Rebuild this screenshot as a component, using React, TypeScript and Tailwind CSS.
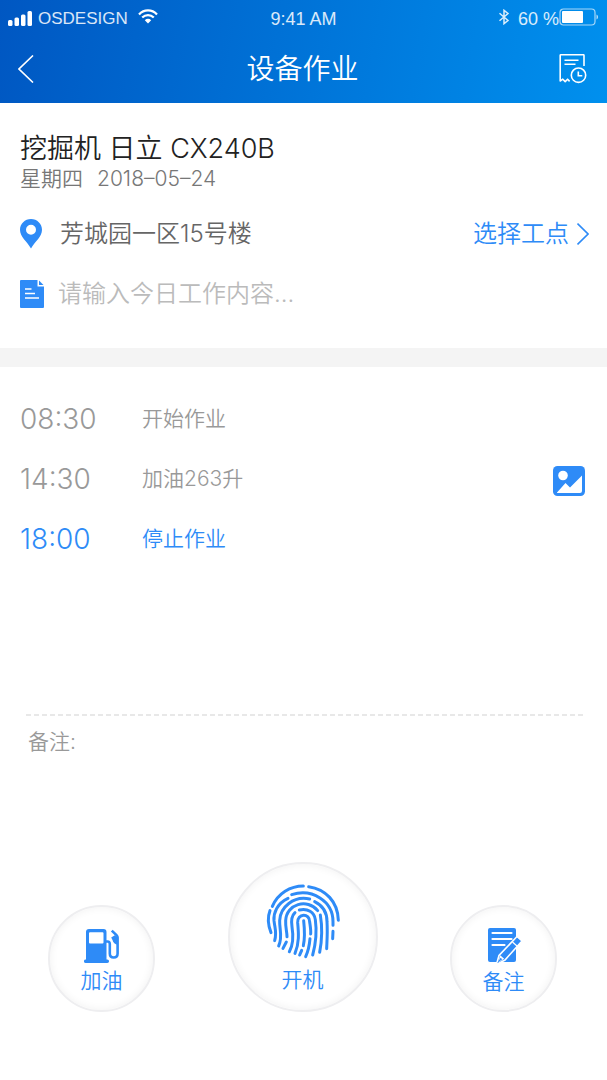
import type { ReactNode } from "react";
import { clsx } from "clsx";

type LogEntry = {
  time: string;
  label: string;
  active?: boolean;
  hasPhoto?: boolean;
};

const entries: LogEntry[] = [
  { time: "08:30", label: "开始作业" },
  { time: "14:30", label: "加油263升", hasPhoto: true },
  { time: "18:00", label: "停止作业", active: true },
];

function SignalIcon() {
  return (
    <svg className="h-4 w-6" viewBox="0 0 24 16" fill="currentColor">
      <rect x="0" y="9" width="4.5" height="6" rx="1.5" />
      <rect x="6.5" y="6.5" width="4.5" height="8.5" rx="1.5" />
      <rect x="13" y="3.5" width="4.5" height="11.5" rx="1.5" />
      <rect x="19.5" y="0" width="4.5" height="15" rx="1.5" />
    </svg>
  );
}

function WifiIcon() {
  return (
    <svg className="mb-1 h-4 w-5" viewBox="0 0 20 16" fill="none" stroke="currentColor" strokeWidth="2.2">
      <path d="M1 5.4C6-.1 14-.1 19 5.4" />
      <path d="M4.2 8.6c3.3-3.4 8.3-3.4 11.6 0" />
      <path d="M6.8 11.2c1.8-1.8 4.6-1.8 6.4 0L10 14.6z" fill="currentColor" stroke="none" />
    </svg>
  );
}

function BluetoothIcon() {
  return (
    <svg className="mb-1 h-4 w-3" viewBox="0 0 12 16" fill="none" stroke="currentColor" strokeWidth="1.5">
      <path d="M1.5 4.2l8.5 7.3-4 3.2V1.3l4 3.2-8.5 7.3" />
    </svg>
  );
}

function BatteryIcon() {
  return (
    <svg className="mb-1 h-[18px] w-10" viewBox="0 0 40 18">
      <rect x="1" y="1" width="35" height="16" rx="3.5" fill="none" stroke="white" strokeOpacity=".65" strokeWidth="1.2" />
      <rect x="3" y="3" width="21" height="12" rx="1" fill="white" />
      <path d="M37.5 6.5c2 .8 2 4.2 0 5z" fill="white" fillOpacity=".7" />
    </svg>
  );
}

function HistoryIcon() {
  return (
    <svg className="h-[30px] w-7" viewBox="0 0 28 30" fill="none" stroke="currentColor" strokeWidth="1.6">
      <path d="M25 12V1.5a.8.8 0 0 0-.8-.8H2a.8.8 0 0 0-.8.8V27l2.6-1.8 2.4 2.4 2.4-2.4 2 2.2" strokeLinejoin="round" />
      <path d="M5.5 6.3h14M5.5 10.3h11" />
      <circle cx="19.5" cy="21.2" r="7.2" />
      <path d="M19.3 17.5v4.2h4" />
    </svg>
  );
}

function PinIcon() {
  return (
    <svg className="h-[30px] w-6" viewBox="0 0 24 30">
      <path
        d="M11 0C4.9 0 0 4.8 0 10.8 0 18 7 22.5 11 29.5 15 22.5 22 18 22 10.8 22 4.8 17.1 0 11 0zm0 5.8a5 5 0 1 1 0 10 5 5 0 0 1 0-10z"
        fill="#2e8bf7"
      />
    </svg>
  );
}

function DocumentIcon() {
  return (
    <svg className="h-7 w-6" viewBox="0 0 24 28">
      <path d="M1 0h16.5v6.5H24V27a1 1 0 0 1-1 1H1a1 1 0 0 1-1-1V1a1 1 0 0 1 1-1z" fill="#2e8bf7" />
      <path d="M19 .5L23.5 5H19z" fill="#2e8bf7" />
      <path d="M5 9h6.5M5 13.5h10M5 18h14" stroke="white" strokeWidth="1.5" />
    </svg>
  );
}

function PhotoIcon() {
  return (
    <svg className="h-[30px] w-8" viewBox="0 0 32 30">
      <rect width="32" height="30" rx="4.5" fill="#2e8bf7" />
      <circle cx="10" cy="9.5" r="4.8" fill="white" />
      <path d="M4 26.5l8.500-9.500 4.500 4.500L29 9.500V25a2 2 0 0 1-2 2H4z" fill="white" />
    </svg>
  );
}

function FuelIcon() {
  return (
    <svg className="h-[34px] w-9" viewBox="0 0 36 34">
      <path
        d="M5 0h14.500a3 3 0 0 1 3 3v27.500h.8a1.700 1.700 0 0 1 0 3.500H1.700a1.700 1.700 0 0 1 0-3.500H2V3a3 3 0 0 1 3-3zm1 3.200a1 1 0 0 0-1 1v9.300a1 1 0 0 0 1 1h12.500a1 1 0 0 0 1-1V4.200a1 1 0 0 0-1-1z"
        fill="#2e8bf7"
        fillRule="evenodd"
      />
      <path
        d="M22 12.500h1.500c1.600 0 2.300.8 2.300 2.500v9.500c0 2.600 1.300 4 3.900 4s3.900-1.400 3.900-4V8.500c0-.9-.3-1.500-.9-2.100L27.800 1.600"
        fill="none"
        stroke="#2e8bf7"
        strokeWidth="2.600"
      />
      <path d="M27.200 8.600l3.600-2.300 3.200 2.700v6.800c-3-.6-5-2.300-5.500-4.900z" fill="#2e8bf7" />
    </svg>
  );
}

function NoteIcon() {
  return (
    <svg className="h-9 w-9" viewBox="0 0 36 36">
      <rect x="2" y="0" width="28" height="34" rx="2" fill="#2e8bf7" />
      <path d="M6.500 5h19M6.500 11h19M6.500 17h12" stroke="white" strokeWidth="2.200" strokeLinecap="round" />
      <path d="M31 8.500l5 4.500-17 19-8.500 4.500 2.500-9z" fill="#2e8bf7" stroke="white" strokeWidth="1.600" />
      <path d="M14.200 27.200l4 3.600-6 3.600z" fill="white" />
      <path d="M26.500 14l5 4.500" stroke="white" strokeWidth="1.200" />
      <path d="M14.600 29.800l1.600 1.500-5.200 3.900z" fill="#2e8bf7" />
    </svg>
  );
}

function FingerprintIcon() {
  return (
    <svg
      className="size-[82px]"
      viewBox="0 0 246 246"
      fill="none"
      stroke="#2e8bf7"
      strokeWidth="9"
      strokeLinecap="round"
    >
      <path d="M31 79C48 40 85 18 124 18" />
      <path d="M140 20C190 27 228 65 229 121" />
      <path d="M24 92C15 115 18 135 27 158" />
      <path d="M89 44C150 25 213 62 213 125V136M213 154L212 176" />
      <path d="M78 55C45 70 34 100 36 122C39 148 45 158 38 182" />
      <path d="M50 198C63 170 52 150 53 122C54 82 95 46 143 57" />
      <path d="M158 65C185 78 195 100 195 125C197 160 195 180 194 206" />
      <path d="M75 170C75 155 70 143 71 122C73 72 136 54 167 92" />
      <path d="M73 186L63 205" />
      <path d="M175 105C181 140 180 180 173 217" />
      <path d="M82 215C96 190 94 165 90 140C87 120 90 106 99 98" />
      <path d="M112 90C137 84 157 97 160 119C165 155 161 192 152 225" />
      <path d="M99 220C112 190 110 160 107 128C105 99 144 99 143 126C145 140 147 150 146 162" />
      <path d="M125 122C128 150 129 175 124 197M119 211L113 225" />
      <path d="M144 176C142 200 138 215 131 230" />
    </svg>
  );
}

function StatusBar() {
  return (
    <div className="grid h-[37px] grid-cols-3 items-center px-2 font-['Liberation_Sans',sans-serif] text-lg leading-5 text-white/85">
      <div className="flex items-center gap-1.5 text-white">
        <SignalIcon />
        <span className="text-[17px] text-white/85">OSDESIGN</span>
        <span className="ml-1">
          <WifiIcon />
        </span>
      </div>
      <span className="text-center">9:41 AM</span>
      <div className="flex items-center justify-end">
        <BluetoothIcon />
        <span className="ml-2">60 %</span>
        <BatteryIcon />
      </div>
    </div>
  );
}

type ActionButtonProps = {
  label: string;
  icon: ReactNode;
  large?: boolean;
};

function ActionButton({ label, icon, large = false }: ActionButtonProps) {
  return (
    <button
      type="button"
      className={clsx(
        "flex shrink-0 flex-col items-center justify-center rounded-full border-2 border-[#eeeef0] bg-white text-[21px] leading-7 text-[#2e8bf7]",
        "shadow-[inset_0_0_8px_rgba(0,0,0,0.06)]",
        large ? "size-[150px] gap-1" : "size-[107px] gap-1 pt-1.5",
      )}
    >
      {icon}
      <span>{label}</span>
    </button>
  );
}

export default function App() {
  return (
    <div className="min-h-screen bg-white font-['Inter','Noto_Sans_CJK_SC',sans-serif] font-[350]">
      <header className="bg-linear-100 from-[#0057c2] to-[#0090ee] text-white">
        <StatusBar />
        <div className="flex h-[66px] items-center justify-between pr-5 pb-0.5 pl-[18px]">
          <button type="button" aria-label="返回">
            <svg className="h-7 w-4" viewBox="0 0 16 28" fill="none" stroke="currentColor" strokeWidth="1.6">
              <path d="M15 .5L1 14l14 13.5" />
            </svg>
          </button>
          <h1 className="pl-3 text-[28px] leading-9">设备作业</h1>
          <button type="button" aria-label="作业记录">
            <HistoryIcon />
          </button>
        </div>
      </header>

      <main>
        <section className="pt-[30px] pr-[18px] pb-8 pl-5">
          <h2 className="text-[27px] leading-8 text-[#222]">挖掘机 日立 CX240B</h2>
          <p className="flex gap-3.5 text-[21px] leading-7 text-[#777]">
            <span>星期四</span>
            <time dateTime="2018-05-24">2018–05–24</time>
          </p>

          <div className="mt-[19px] flex h-11 items-center justify-between">
            <p className="flex items-center gap-4 text-2xl text-[#666]">
              <PinIcon />
              芳城园一区15号楼
            </p>
            <button type="button" className="flex items-center gap-2 text-2xl text-[#2e8bf7]">
              选择工点
              <svg className="h-6 w-3" viewBox="0 0 12 24" fill="none" stroke="currentColor" strokeWidth="1.6">
                <path d="M.5 1.5L11 12 .5 22.5" />
              </svg>
            </button>
          </div>

          <label className="mt-4 flex h-11 items-center gap-3.5">
            <DocumentIcon />
            <input
              type="text"
              aria-label="今日工作内容"
              placeholder="请输入今日工作内容..."
              className="min-w-0 flex-1 bg-transparent text-2xl text-[#666] outline-none placeholder:text-[#bbb]"
            />
          </label>
        </section>

        <div className="h-[19px] bg-[#f4f4f4]" />

        <section className="pt-[22px] pr-[22px] pl-5">
          <ul>
            {entries.map((entry) => (
              <li
                key={entry.time}
                className={clsx("flex h-[60px] items-center", entry.active ? "text-[#2e8bf7]" : "text-[#999]")}
              >
                <time className="w-[122px] text-[28px] leading-9">{entry.time}</time>
                <span className="flex-1 text-[21px] leading-7">{entry.label}</span>
                {entry.hasPhoto && (
                  <button type="button" aria-label="查看照片" className="pt-1">
                    <PhotoIcon />
                  </button>
                )}
              </li>
            ))}
          </ul>
        </section>

        <section className="px-6 pt-[145px]">
          <svg className="block h-0.5 w-full" aria-hidden="true">
            <line x1="2" y1="1" x2="100%" y2="1" stroke="#e8e8e8" strokeWidth="2" strokeDasharray="5 3" />
          </svg>
          <p className="min-h-[146px] px-1 pt-3 text-[21px] leading-7 text-[#999]">备注:</p>
        </section>
      </main>

      <footer className="flex items-end justify-between pr-[50px] pb-16 pl-12">
        <ActionButton label="加油" icon={<FuelIcon />} />
        <ActionButton label="开机" icon={<FingerprintIcon />} large />
        <ActionButton label="备注" icon={<NoteIcon />} />
      </footer>
    </div>
  );
}
